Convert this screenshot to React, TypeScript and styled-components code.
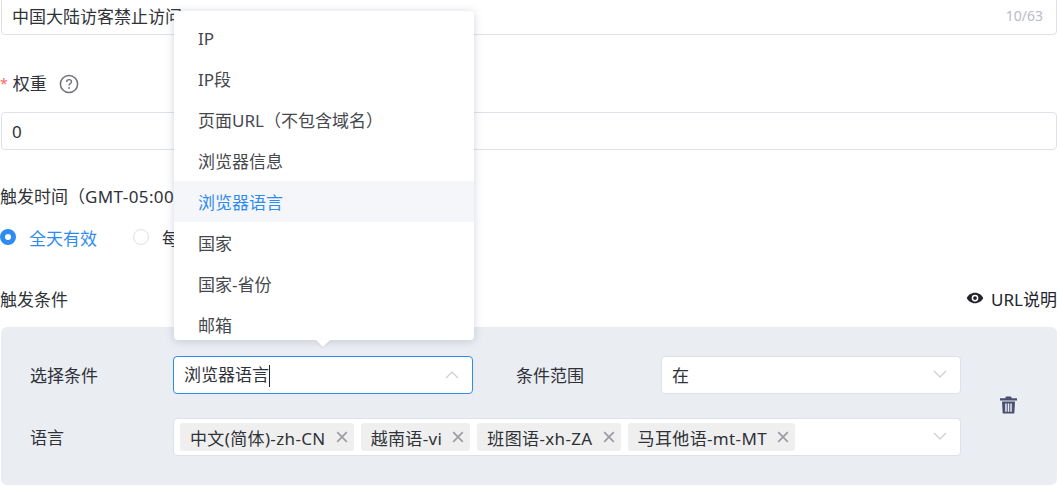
import React from 'react';
import styled, { createGlobalStyle } from 'styled-components';

const GlobalStyle = createGlobalStyle`
  html, body {
    margin: 0;
    padding: 0;
    height: 486px;
    overflow: hidden;
    background: #fff;
  }
  body {
    font-family: "Noto Sans", "Noto Sans CJK SC", sans-serif;
    font-size: 17px;
    color: #2f3238;
  }
`;

const Page = styled.div`
  position: relative;
  width: 1057px;
  height: 486px;
  overflow: hidden;
`;

const Form = styled.div`
  display: flex;
  flex-direction: column;
  margin-top: -3px;
  padding-left: 1px;
`;

const TextField = styled.div`
  height: 38px;
  box-sizing: border-box;
  border: 1px solid #dfe1ea;
  border-radius: 4px;
  padding: 0 10px;
  display: flex;
  align-items: center;
  justify-content: space-between;
  line-height: 1;
`;

const Counter = styled.span`
  font-size: 14px;
  color: #b9bcc4;
  margin-right: 3px;
`;

const FieldLabel = styled.div<{ $top: number; $bottom: number }>`
  height: 24px;
  line-height: 24px;
  display: flex;
  align-items: center;
  margin-top: ${({ $top }) => $top}px;
  margin-bottom: ${({ $bottom }) => $bottom}px;
  margin-left: -1px;
`;

const TimeZone = styled.span`
  letter-spacing: 0.4px;
`;

const Required = styled.span`
  color: #f56c6c;
  font-size: 14px;
  margin-right: 5px;
`;

const HelpIcon = styled.svg`
  width: 20px;
  height: 20px;
  margin-left: 12px;
  color: #6f7178;
`;

const RadioRow = styled.div`
  height: 24px;
  display: flex;
  align-items: center;
  margin-left: -1px;
  margin-top: 16px;
`;

const RadioItem = styled.label<{ $width: number; $active?: boolean }>`
  width: ${({ $width }) => $width}px;
  display: flex;
  align-items: center;
  gap: 13px;
  color: ${({ $active }) => ($active ? '#2e8cf0' : '#2f3238')};
`;

const RadioDot = styled.span<{ $active?: boolean }>`
  width: 16px;
  height: 16px;
  box-sizing: border-box;
  border-radius: 50%;
  border: ${({ $active }) => ($active ? '5px solid #2e8cf0' : '1px solid #dfe1ea')};
  background: #fff;
  flex: none;
`;

const SectionHead = styled.div`
  height: 24px;
  box-sizing: border-box;
  padding-bottom: 2px;
  margin: 38px 0 16px -1px;
  display: flex;
  align-items: center;
  justify-content: space-between;
`;

const UrlLink = styled.span`
  display: flex;
  align-items: center;
  gap: 7px;
  color: #23252b;
`;

const ConditionPanel = styled.div`
  height: 158px;
  box-sizing: border-box;
  background: #eaedf2;
  border-radius: 6px;
  padding: 29px 0 0 29px;
  display: flex;
`;

const ConditionGrid = styled.div`
  display: grid;
  grid-template-columns: 143px 300px 43px 145px 300px;
  grid-auto-rows: 38px;
  row-gap: 24px;
  align-items: center;
  width: 931px;
`;

const ConditionLabel = styled.div<{ $col?: number }>`
  grid-column: ${({ $col }) => $col ?? 1};
  margin-top: -2px;
`;

const Select = styled.div<{ $focused?: boolean; $col?: string }>`
  grid-column: ${({ $col }) => $col ?? 'auto'};
  height: 38px;
  box-sizing: border-box;
  background: #fff;
  border: 1px solid ${({ $focused }) => ($focused ? '#2e8cf0' : '#dfe1ea')};
  border-radius: 4px;
  padding: 0 13px 0 10px;
  display: flex;
  align-items: center;
  justify-content: space-between;
`;

const SelectValue = styled.span`
  margin-top: -2px;
`;

const Caret = styled.span`
  display: inline-block;
  width: 1px;
  height: 22px;
  background: #23252b;
  vertical-align: middle;
`;

const TagList = styled.div`
  display: flex;
  gap: 7px;
  margin-left: -4px;
`;

const Tag = styled.span`
  height: 28px;
  box-sizing: border-box;
  background: #efefef;
  border-radius: 3px;
  padding: 0 6px 0 10px;
  display: flex;
  align-items: center;
  gap: 10px;
  color: #2f3238;
  white-space: nowrap;
  letter-spacing: 0.36px;
`;

const ActionCell = styled.div`
  flex: 1;
  display: flex;
  align-items: center;
  justify-content: center;
  height: 97px;
  margin-left: -2px;
`;

const Dropdown = styled.div`
  position: absolute;
  left: 174px;
  top: 11px;
  width: 300px;
  height: 329px;
  background: #fff;
  border-radius: 4px;
  box-shadow: 0 1px 8px rgba(80, 90, 120, 0.25);
`;

const OptionList = styled.ul`
  list-style: none;
  margin: 0;
  padding: 6px 0 0;
  height: 100%;
  box-sizing: border-box;
  overflow: hidden;
  border-radius: 4px;
`;

const Option = styled.li<{ $active?: boolean }>`
  height: 41px;
  line-height: 44px;
  padding-left: 24px;
  color: ${({ $active }) => ($active ? '#2e8cf0' : '#46484e')};
  background: ${({ $active }) => ($active ? '#f5f6fa' : 'transparent')};
`;

const Arrow = styled.span`
  position: absolute;
  left: 142px;
  bottom: -7px;
  width: 0;
  height: 0;
  border-left: 7px solid transparent;
  border-right: 7px solid transparent;
  border-top: 7px solid #fff;
  filter: drop-shadow(0 1px 1px rgba(80, 90, 120, 0.12));
`;

const Chevron = ({ up }: { up?: boolean }) => (
  <svg width="14" height="14" viewBox="0 0 14 14" fill="none" stroke="#c9ccd4" strokeWidth="1.2">
    <path d={up ? 'M1 10l6-6 6 6' : 'M1 3l6 6 6-6'} />
  </svg>
);

const Close = () => (
  <svg width="12" height="12" viewBox="0 0 12 12" fill="none" stroke="#9b9da3" strokeWidth="1.7">
    <path d="M1.200 1.200l9.600 9.600M10.800 1.200l-9.600 9.600" />
  </svg>
);

const options = ['IP', 'IP段', '页面URL（不包含域名）', '浏览器信息', '浏览器语言', '国家', '国家-省份', '邮箱'];
const tags = ['中文(简体)-zh-CN', '越南语-vi', '班图语-xh-ZA', '马耳他语-mt-MT'];

export default function App() {
  return (
    <Page>
      <GlobalStyle />
      <Form>
        <TextField>
          <span>中国大陆访客禁止访问</span>
          <Counter>10/63</Counter>
        </TextField>

        <FieldLabel $top={37} $bottom={16}>
          <Required>*</Required>
          权重
          <HelpIcon viewBox="0 0 20 20" fill="none">
            <circle cx="10" cy="10" r="8.600" stroke="currentColor" strokeWidth="1.500" />
            <path d="M7.600 8c0-1.500 1.100-2.400 2.500-2.400s2.400.9 2.400 2.100c0 1.900-2.500 1.900-2.500 3.800" stroke="currentColor" strokeWidth="1.400" />
            <circle cx="10" cy="14" r=".9" fill="currentColor" />
          </HelpIcon>
        </FieldLabel>
        <TextField>0</TextField>

        <FieldLabel $top={35} $bottom={0}>
          <span>
            触发时间（<TimeZone>GMT-05:00</TimeZone>）
          </span>
        </FieldLabel>
        <RadioRow>
          <RadioItem $width={133} $active>
            <RadioDot $active />
            全天有效
          </RadioItem>
          <RadioItem $width={200}>
            <RadioDot />
            每天
          </RadioItem>
        </RadioRow>

        <SectionHead>
          <span>触发条件</span>
          <UrlLink>
            <svg width="18" height="18" viewBox="0 0 24 24" fill="#23252b">
              <path d="M12 5C7 5 2.700 8.100 1 12c1.700 3.900 6 7 11 7s9.300-3.100 11-7c-1.700-3.900-6-7-11-7zm0 11.500a4.500 4.500 0 1 1 0-9 4.500 4.500 0 0 1 0 9zm0-7a2.500 2.500 0 1 0 0 5 2.500 2.500 0 0 0 0-5z" />
            </svg>
            URL说明
          </UrlLink>
        </SectionHead>

        <ConditionPanel>
          <ConditionGrid>
            <ConditionLabel>选择条件</ConditionLabel>
            <Select $focused>
              <SelectValue>
                浏览器语言
                <Caret />
              </SelectValue>
              <Chevron up />
            </Select>
            <ConditionLabel $col={4}>条件范围</ConditionLabel>
            <Select>
              <SelectValue>在</SelectValue>
              <Chevron />
            </Select>
            <ConditionLabel>语言</ConditionLabel>
            <Select $col="2 / 6">
              <TagList>
                {tags.map((t) => (
                  <Tag key={t}>
                    {t}
                    <Close />
                  </Tag>
                ))}
              </TagList>
              <Chevron />
            </Select>
          </ConditionGrid>
          <ActionCell>
            <svg width="17" height="18" viewBox="0 0 17 18" fill="#4d4f70">
              <path d="M6 0.500h5l.8 1.700H17v2.300H0V2.200h5.200z" />
              <path d="M2 5.500h13l-.7 12H2.700zM5.200 7.500v8.200h1.500V7.500zm2.550 0v8.200h1.500V7.500zm2.550 0v8.200h1.500V7.500z" fillRule="evenodd" />
            </svg>
          </ActionCell>
        </ConditionPanel>
      </Form>

      <Dropdown>
        <OptionList>
          {options.map((o) => (
            <Option key={o} $active={o === '浏览器语言'}>
              {o}
            </Option>
          ))}
        </OptionList>
        <Arrow />
      </Dropdown>
    </Page>
  );
}
